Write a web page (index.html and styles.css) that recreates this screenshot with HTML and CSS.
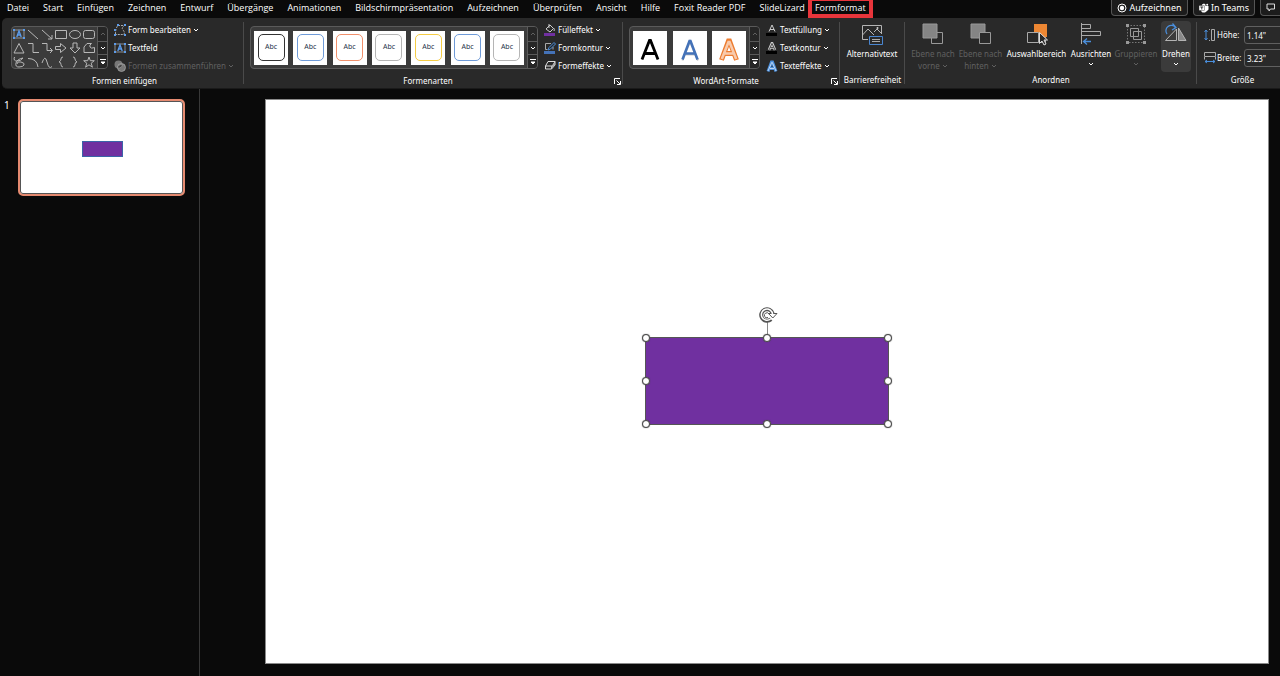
FILE: index.html
```html
<!DOCTYPE html>
<html lang="de">
<head>
<meta charset="utf-8">
<title>Präsentation – Formformat</title>
<link rel="stylesheet" href="styles.css">
</head>
<body>
<svg class="defs" aria-hidden="true">
  <symbol id="down" viewBox="0 0 6 6"><path d="M1 2l2 2 2-2" fill="none" stroke="currentColor"/></symbol>
  <symbol id="up" viewBox="0 0 6 6"><path d="M1 4l2-2 2 2" fill="none" stroke="currentColor"/></symbol>
  <symbol id="more" viewBox="0 0 6 8"><path d="M0 1.500h6M1 4l2 2 2-2z" fill="currentColor" stroke="currentColor"/></symbol>
  <symbol id="launch" viewBox="0 0 7 7"><path d="M.5 6V.5H6M2.500 2.500l3.500 3.500M6.500 3v3.500H3" fill="none" stroke="currentColor"/></symbol>
  <symbol id="textbox" viewBox="0 0 12 10"><path d="M1.500 1h9M1.500 9h9M1 1.500v7M11 1.500v7" fill="none" stroke="#b8b8b8" stroke-width=".7"/><path d="M0 0h2v2H0zM10 0h2v2h-2zM0 8h2v2H0zM10 8h2v2h-2z" fill="#5b9bea"/><path d="M3.800 8L6 2l2.200 6M4.700 6h2.600" fill="none" stroke="#5b9bea" stroke-width="1.400"/></symbol>
</svg>

<header class="tabs">
  <nav class="tab-list">
    <button class="tab">Datei</button>
    <button class="tab">Start</button>
    <button class="tab">Einfügen</button>
    <button class="tab">Zeichnen</button>
    <button class="tab">Entwurf</button>
    <button class="tab">Übergänge</button>
    <button class="tab">Animationen</button>
    <button class="tab">Bildschirmpräsentation</button>
    <button class="tab">Aufzeichnen</button>
    <button class="tab">Überprüfen</button>
    <button class="tab">Ansicht</button>
    <button class="tab">Hilfe</button>
    <button class="tab">Foxit Reader PDF</button>
    <button class="tab">SlideLizard</button>
    <button class="tab tab-active">Formformat</button>
  </nav>
  <div class="actions">
    <button class="action record"><svg width="10" height="10" viewBox="0 0 10 10"><circle cx="5" cy="5" r="4" fill="none" stroke="#fff"/><circle cx="5" cy="5" r="2.2" fill="#fff"/></svg>Aufzeichnen</button>
    <button class="action teams"><svg width="10" height="10" viewBox="0 0 10 10"><path d="M3 3V1.500L5 .5l1.500 1V3H9.500v3.500L8 8 6 9.500H3.500L2 8z" fill="#fff"/><circle cx="8.200" cy="1.700" r="1" fill="#fff"/><rect y="2.500" width="5.500" height="5" rx=".5" fill="#fff" stroke="#222" stroke-width=".4"/><path d="M1.300 4h3M2.800 4v2.500" stroke="#222" fill="none" stroke-width=".9"/></svg>In Teams</button>
    <button class="action comments" aria-label="Kommentare"><svg width="9" height="9" viewBox="0 0 9 9"><path d="M1 1h7.500v5H4.500L3 8V6H1z" fill="none" stroke="#ddd"/></svg></button>
  </div>
</header>

<section class="ribbon">
  <div class="group g-insert">
    <div class="group-body">
      <div class="gallery">
        <div class="shapes">
          <button aria-label="Textfeld"><svg class="box" viewBox="0 0 12 10"><use href="#textbox"/></svg></button>
          <button aria-label="Linie"><svg viewBox="0 0 12 12"><path d="M1 2l10 9"/></svg></button>
          <button aria-label="Pfeil"><svg viewBox="0 0 12 12"><path d="M1 2l10 9M11 7v4H7"/></svg></button>
          <button aria-label="Rechteck"><svg viewBox="0 0 12 12"><path d="M.5 2.500h11v8H.5z"/></svg></button>
          <button aria-label="Ellipse"><svg viewBox="0 0 12 12"><ellipse cx="6" cy="6.500" rx="5.500" ry="4"/></svg></button>
          <button aria-label="Abgerundetes Rechteck"><svg viewBox="0 0 12 12"><rect x=".5" y="2.500" width="11" height="8" rx="2"/></svg></button>
          <button aria-label="Dreieck"><svg viewBox="0 0 12 12"><path d="M6 1.500l5 9.500H1z"/></svg></button>
          <button aria-label="Gewinkelte Verbindung"><svg viewBox="0 0 12 12"><path d="M1 1.500h5v9h6"/></svg></button>
          <button aria-label="Gewinkelter Pfeil"><svg viewBox="0 0 12 12"><path d="M1 1.500h5v7h5M9 6l2.500 2.500L9 11"/></svg></button>
          <button aria-label="Pfeil rechts"><svg viewBox="0 0 12 12"><path d="M.5 4.500h5v-3L11 6l-5.500 4.500v-3h-5z"/></svg></button>
          <button aria-label="Pfeil unten"><svg viewBox="0 0 12 12"><path d="M4 1h4v5h3l-5 5-5-5h3z"/></svg></button>
          <button aria-label="Freihandform"><svg viewBox="0 0 12 12"><path d="M1 10.500V5l3-3.500h4.500Q6 3 7 5t4.500.5v5z"/></svg></button>
          <button aria-label="Skizze"><svg viewBox="0 0 12 12"><path d="M1.500 1Q0 5 4 5t6-3Q4 3 3 7t3 4 5-2-3-3-4 2"/></svg></button>
          <button aria-label="Bogen"><svg viewBox="0 0 12 12"><path d="M1 2.500q9 0 10 8.500"/></svg></button>
          <button aria-label="Kurve"><svg viewBox="0 0 12 12"><path d="M1 7q3-9 5-1t5 4.500"/></svg></button>
          <button aria-label="Klammer auf"><svg viewBox="0 0 12 12"><path d="M8 1Q6 1 6 3t-2 3q2 0 2 2.500T8 11"/></svg></button>
          <button aria-label="Klammer zu"><svg viewBox="0 0 12 12"><path d="M4 1q2 0 2 2t2 3Q6 6 6 8.500T4 11"/></svg></button>
          <button aria-label="Stern"><svg viewBox="0 0 12 12"><path d="M6 1l1.300 3.700h4L8.200 7.200l1.200 4L6 8.800l-3.400 2.400 1.200-4L.7 4.700h4z"/></svg></button>
        </div>
        <div class="scroll">
          <button class="off" aria-label="Nach oben"><svg width="6" height="6"><use href="#up"/></svg></button>
          <button aria-label="Nach unten"><svg width="6" height="6"><use href="#down"/></svg></button>
          <button aria-label="Mehr"><svg width="6" height="8"><use href="#more"/></svg></button>
        </div>
      </div>
      <div class="commands">
        <button><svg width="12" height="12" viewBox="0 0 12 12"><path d="M1.500 10Q1.500 4 4 1.500h6.500Q7 4 9 6t1 4.500H2" fill="none" stroke="#aaa" stroke-dasharray="2 1"/><path d="M3 0h2v2H3zM10 0h2v2h-2zM0 5h2v2H0zM0 10h2v2H0zM10 10h2v2h-2z" fill="#5b9bea"/></svg>Form bearbeiten<svg width="6" height="6"><use href="#down"/></svg></button>
        <button><svg width="12" height="10"><use href="#textbox"/></svg>Textfeld</button>
        <button class="off"><svg width="12" height="12" viewBox="0 0 12 12"><circle cx="4.500" cy="4.500" r="4" fill="#777"/><circle cx="7.500" cy="7.500" r="4" fill="#777" stroke="#aaa" stroke-width=".7"/><path d="M8.500 4.500a4 4 0 0 1-5 3.500 4 4 0 0 1 5-3.500" fill="#444" stroke="#aaa" stroke-width=".6"/></svg>Formen zusammenführen<svg width="6" height="6"><use href="#down"/></svg></button>
      </div>
    </div>
    <div class="group-label"><span>Formen einfügen</span></div>
  </div>

  <div class="group g-styles">
    <div class="group-body">
      <div class="gallery">
        <div class="tiles">
          <button class="tile"><span class="abc black">Abc</span></button>
          <button class="tile"><span class="abc blue">Abc</span></button>
          <button class="tile"><span class="abc orange">Abc</span></button>
          <button class="tile"><span class="abc gray">Abc</span></button>
          <button class="tile"><span class="abc yellow">Abc</span></button>
          <button class="tile"><span class="abc blue">Abc</span></button>
          <button class="tile"><span class="abc gray">Abc</span></button>
        </div>
        <div class="scroll">
          <button class="off" aria-label="Nach oben"><svg width="6" height="6"><use href="#up"/></svg></button>
          <button aria-label="Nach unten"><svg width="6" height="6"><use href="#down"/></svg></button>
          <button aria-label="Mehr"><svg width="6" height="8"><use href="#more"/></svg></button>
        </div>
      </div>
      <div class="commands">
        <button><svg width="12" height="12" viewBox="0 0 12 12"><path d="M2 5l4-4 3.500 3.500L6 8zM5 0v4M9.500 4q1.500 1 .5 3" fill="none" stroke="#ccc"/><path d="M0 9h11v3H0z" fill="#7030a0"/></svg>Fülleffekt<svg width="6" height="6"><use href="#down"/></svg></button>
        <button><svg width="12" height="12" viewBox="0 0 12 12"><path d="M7 1.500H1.500v6h2M9 5v2.500" fill="none" stroke="#aaa"/><path d="M4 8l1-2.500L10 .5 11.500 2l-5 5z" fill="none" stroke="#4a8edb"/><path d="M0 9h11v3H0z" fill="#4472b8"/></svg>Formkontur<svg width="6" height="6"><use href="#down"/></svg></button>
        <button><svg width="12" height="12" viewBox="0 0 12 12"><path d="M4 1.500h7L8.500 6H1.500zM1.500 6v3h6V6M7.500 9L11 5V1.500" fill="none" stroke="#ddd"/><path d="M7.500 6L11 2v3L7.500 9z" fill="#aaa"/></svg>Formeffekte<svg width="6" height="6"><use href="#down"/></svg></button>
      </div>
    </div>
    <div class="group-label"><span>Formenarten</span><button class="launcher" aria-label="Form formatieren"><svg width="7" height="7"><use href="#launch"/></svg></button></div>
  </div>

  <div class="group g-wordart">
    <div class="group-body">
      <div class="gallery">
        <div class="tiles">
          <button class="tile" aria-label="Schwarz"><svg width="34" height="34" viewBox="0 0 34 34"><path d="M9 28.500L16.500 9.500h1L25 28.500M11.500 22.500h11" fill="none" stroke="#000" stroke-width="2.800"/></svg></button>
          <button class="tile" aria-label="Blau"><svg width="34" height="34" viewBox="0 0 34 34"><path d="M9.500 29.500L17 10.500 25 29.500M12 23.500h10" fill="none" stroke="#ccc" stroke-width="2"/><path d="M9.500 28.500L16.500 10h1L24.500 28.500M12 22.500h10" fill="none" stroke="#4472b8" stroke-width="2.600"/></svg></button>
          <button class="tile" aria-label="Orange"><svg width="34" height="34" viewBox="0 0 34 34"><path d="M9.500 29L16.500 10h1L24.500 29M12 22.500h10" fill="none" stroke="#ed7d31" stroke-width="5"/><path d="M9.800 28L16.500 11h1L24.200 28M12 22.500h10" fill="none" stroke="#f8cbad" stroke-width="2.600"/></svg></button>
        </div>
        <div class="scroll">
          <button class="off" aria-label="Nach oben"><svg width="6" height="6"><use href="#up"/></svg></button>
          <button aria-label="Nach unten"><svg width="6" height="6"><use href="#down"/></svg></button>
          <button aria-label="Mehr"><svg width="6" height="8"><use href="#more"/></svg></button>
        </div>
      </div>
      <div class="commands">
        <button><svg width="12" height="12" viewBox="0 0 12 12"><path d="M3 7.500L6 1l3 6.500M4 5.500h4" fill="none" stroke="#ccc"/><path d="M0 9h11v3H0z" fill="#000"/></svg>Textfüllung<svg width="6" height="6"><use href="#down"/></svg></button>
        <button><svg width="12" height="12" viewBox="0 0 12 12"><path d="M3 8L6 1l3 7M4.500 5.500h3" fill="none" stroke="#ccc" stroke-width="2.600"/><path d="M3 8L6 1.500 9 8M4.500 5.500h3" fill="none" stroke="#333" stroke-width=".8"/><path d="M0 9h11v3H0z" fill="#000"/></svg>Textkontur<svg width="6" height="6"><use href="#down"/></svg></button>
        <button><svg width="12" height="12" viewBox="0 0 12 12"><path d="M2 11.500L5.500 2h1L10 11.500M4 8.500h4" fill="none" stroke="#4a8edb" stroke-width="3"/><path d="M2 11L5.700 2.500h.6L10 11M4 8.500h4" fill="none" stroke="#dce9f8" stroke-width=".8"/></svg>Texteffekte<svg width="6" height="6"><use href="#down"/></svg></button>
      </div>
    </div>
    <div class="group-label"><span>WordArt-Formate</span><button class="launcher" aria-label="Texteffekte formatieren"><svg width="7" height="7"><use href="#launch"/></svg></button></div>
  </div>

  <div class="group g-alt">
    <div class="group-body">
      <button class="big"><svg width="24" height="24" viewBox="0 0 24 24"><path d="M8 17.500H2.500v-14h19V12M2.500 13l5.500-6 6 6M14 10l3-3 4 4" fill="none" stroke="#b4b4b4"/><circle cx="17.500" cy="6" r="1" fill="#ccc"/><path d="M9.500 14.500h13v8h-13z" fill="#292929" stroke="#4a86d0"/><path d="M12 17.500h8M12 19.500h8" stroke="#aaa"/></svg>Alternativtext</button>
    </div>
    <div class="group-label"><span>Barrierefreiheit</span></div>
  </div>

  <div class="group g-arrange">
    <div class="group-body">
      <button class="big off"><svg width="24" height="24" viewBox="0 0 24 24"><path d="M10.500 10.500h11v11h-11z" fill="none" stroke="#999"/><path d="M2 2h14v14H2z" fill="#858585" stroke="#999"/></svg><span>Ebene nach<br>vorne <svg width="6" height="6"><use href="#down"/></svg></span></button>
      <button class="big off"><svg width="24" height="24" viewBox="0 0 24 24"><path d="M2 2h14v14H2z" fill="#858585" stroke="#999"/><path d="M10.500 10.500h11v11h-11z" fill="#292929" stroke="#999"/></svg><span>Ebene nach<br>hinten <svg width="6" height="6"><use href="#down"/></svg></span></button>
      <button class="big"><svg width="24" height="24" viewBox="0 0 24 24"><path d="M9 2h13v13H9z" fill="#ed8733"/><path d="M2.500 10.500h11v10h-11zM13.500 15.500h7v5h-7" fill="#292929" stroke="#aaa"/><path d="M14.500 10.500v11l2.500-2.500 2 4 2-1-2-4h3.500z" fill="#292929" stroke="#ddd"/></svg>Auswahlbereich</button>
      <button class="big"><svg width="24" height="24" viewBox="0 0 24 24"><path d="M2.500 1v21M2.500 2.500h9v4h-9M2.500 9.500h19v4h-19" fill="none" stroke="#aaa"/><path d="M12 19.500H4.500M8 16.500l-3.500 3 3.500 3" fill="none" stroke="#4a8edb" stroke-width="1.300"/></svg>Ausrichten<svg class="arrow" width="6" height="6"><use href="#down"/></svg></button>
      <button class="big off"><svg width="24" height="24" viewBox="0 0 24 24"><path d="M3.500 3.500h17v17h-17z" fill="none" stroke="#777" stroke-dasharray="1.500 1.500"/><path d="M2 2h3v3H2zM19 2h3v3h-3zM2 19h3v3H2zM19 19h3v3h-3z" fill="#999"/><path d="M6.500 6.500h8v8h-8zM9.500 9.500h8v8h-8z" fill="none" stroke="#999"/></svg>Gruppieren<svg class="arrow" width="6" height="6"><use href="#down"/></svg></button>
      <button class="big hover"><svg width="24" height="24" viewBox="0 0 24 24"><path d="M12.500 7v11.500H1.500z" fill="none" stroke="#b4b4b4"/><path d="M14.500 6v12.500h7.500z" fill="#888" stroke="#b4b4b4"/><path d="M3 12A5 5 0 0 1 11.500 5.500M8.500 1.500L12 5.500 8 8" fill="none" stroke="#4a8edb" stroke-width="1.300"/></svg>Drehen<svg class="arrow" width="6" height="6"><use href="#down"/></svg></button>
    </div>
    <div class="group-label"><span>Anordnen</span></div>
  </div>

  <div class="group g-size">
    <div class="group-body">
      <label for="height"><svg width="12" height="12" viewBox="0 0 12 12"><path d="M5 .5h1M5 11.500h1" stroke="#aaa"/><path d="M7.500 .5h3v11h-3z" fill="none" stroke="#aaa"/><path d="M2 1v10M.5 3L2 1l1.500 2M.5 9L2 11l1.500-2" fill="none" stroke="#4a8edb"/></svg>Höhe:</label>
      <input id="height" value="1.14&quot;">
      <label for="width"><svg width="12" height="12" viewBox="0 0 12 12"><path d="M.5 .5h11v4H.5zM.5 5v2.500M11.500 5v2.500" fill="none" stroke="#aaa"/><path d="M1 9.500h10M3 8L1 9.500 3 11M9 8l2 1.500L9 11" fill="none" stroke="#4a8edb"/></svg>Breite:</label>
      <input id="width" value="3.23&quot;">
    </div>
    <div class="group-label"><span>Größe</span></div>
  </div>
</section>

<main class="workspace">
  <aside class="thumbs">
    <span class="number">1</span>
    <button class="thumb" aria-label="Folie 1"><span class="thumb-shape"></span></button>
  </aside>
  <section class="editor">
    <div class="slide">
      <div class="shape">
        <span class="stem"></span>
        <svg class="rotate" width="20" height="18" viewBox="0 0 20 18"><path d="M13 13.200A5.800 5.800 0 1 1 14.600 7.500" fill="none" stroke="#555" stroke-width="4"/><path d="M10.500 7.500h8.500l-4.200 4.500z" fill="#fff" stroke="#555"/><path d="M12.800 12.800A5.600 5.600 0 1 1 14.600 8.500" fill="none" stroke="#fff" stroke-width="1.500"/><path d="M10 11.500a2.500 2.500 0 1 1 1-3.500" fill="none" stroke="#555"/></svg>
        <i class="handle n w"></i><i class="handle n c"></i><i class="handle n e"></i>
        <i class="handle m w"></i><i class="handle m e"></i>
        <i class="handle s w"></i><i class="handle s c"></i><i class="handle s e"></i>
      </div>
    </div>
  </section>
</main>
</body>
</html>
```

FILE: styles.css
```css
* { box-sizing: border-box; }
body {
  margin: 0;
  min-height: 100vh;
  display: flex;
  flex-direction: column;
  overflow: hidden;
  background: #0a0a0a;
  color: #fff;
  font: 8px/12px "Noto Sans", "Open Sans", sans-serif;
}
button {
  margin: 0;
  padding: 0;
  border: 0;
  background: none;
  color: inherit;
  font: inherit;
  white-space: nowrap;
}
svg { display: block; flex: none; }
.defs { position: absolute; width: 0; height: 0; }

/* Tab row */
.tabs { display: flex; justify-content: space-between; height: 18px; overflow: hidden; font-size: 9px; }
.tab-list { display: flex; gap: 14px; padding-left: 7px; font-family: "Open Sans", "Noto Sans", sans-serif; }
.tab { height: 16px; }
.tab-active {
  height: 18px;
  margin-left: -11px;
  padding: 0 3px;
  border: 4px solid #e8353b;
  border-top-width: 1px;
}
.actions { display: flex; gap: 5px; }
.action {
  display: flex;
  align-items: center;
  justify-content: center;
  gap: 2px;
  height: 16px;
  border: 1px solid #555;
  border-top: 0;
  border-radius: 0 0 4px 4px;
  background: #1c1c1c;
}
.record { width: 77px; }
.teams { width: 62px; }
.comments { width: 20px; border-right: 0; border-radius: 0 0 0 4px; }

/* Ribbon */
.ribbon {
  display: flex;
  height: 71px;
  margin-left: 2px;
  overflow: hidden;
  border-bottom: 1px solid #1a1a1a;
  border-radius: 5px 0 0 5px;
  background: #292929;
}
.group { position: relative; flex: none; display: flex; flex-direction: column; padding-top: 3px; }
.group:not(:last-child)::after {
  content: "";
  position: absolute;
  top: 4px;
  right: 0;
  bottom: 4px;
  width: 1px;
  background: #4a4a4a;
}
.group-body { display: flex; height: 53px; }
.group-label { display: flex; align-items: center; height: 16px; }
.group-label span { flex: 1; text-align: center; }
.g-insert { width: 242px; padding-left: 9px; }
.g-insert .group-label { padding-right: 6px; }
.g-styles { width: 379px; padding-left: 6px; }
.g-styles .group-label span { padding-right: 8px; }
.g-wordart { width: 217px; padding-left: 6px; }
.g-wordart .group-label span { padding-right: 8px; }
.g-alt { width: 65px; }
.g-arrange { width: 292px; }
.g-size { width: 91px; }
.launcher { width: 9px; height: 7px; }

.gallery {
  display: flex;
  height: 43px;
  margin-top: 5px;
  border: 1px solid #5a5a5a;
  border-radius: 4px;
  background: #3b3b3b;
}
.shapes { display: grid; grid-template-columns: repeat(6, 14px); grid-template-rows: repeat(3, 14px); width: 85px; }
.shapes button { display: grid; place-items: center; }
.shapes svg { width: 12px; height: 12px; fill: none; stroke: #b8b8b8; }
.shapes .box { height: 10px; stroke: none; }
.tiles { flex: 1; display: flex; justify-content: space-between; align-items: center; padding: 0 3px; }
.scroll { display: grid; grid-template-rows: repeat(3, 1fr); width: 10px; border-left: 1px solid #5a5a5a; background: #262626; border-radius: 0 3px 3px 0; }
.scroll button { display: grid; place-items: center; }
.scroll button + button { border-top: 1px solid #5a5a5a; }
.tile { display: grid; place-items: center; width: 34px; height: 34px; background: #fff; }
.g-styles .gallery { width: 288px; }
.g-wordart .gallery { width: 131px; }
.abc {
  width: 27px;
  height: 27px;
  border: 1px solid;
  border-radius: 5px;
  font-size: 7px;
  line-height: 24px;
}
.abc::first-line { color: #26324a; }
.black { border-color: #333; }
.blue { border-color: #6f9bd8; }
.orange { border-color: #f0906c; }
.gray { border-color: #b5b5b5; }
.yellow { border-color: #f5cc45; }

.commands { display: grid; grid-template-rows: repeat(3, 18px); margin-left: 6px; justify-items: start; align-content: start; }
.commands button { display: flex; align-items: center; gap: 2px; }
.off { color: #606060; }

.big { display: flex; flex-direction: column; align-items: center; justify-content: flex-start; }
.big > svg:first-child { margin-top: 1px; margin-bottom: 2px; }
.big .arrow { margin-top: 1px; }
.big span svg { display: inline-block; }
.g-alt .big { width: 64px; }
.g-arrange .group-body { display: grid; grid-template-columns: 48px 47px 65px 44px 46px 32px; padding-left: 4px; }
.hover { margin-left: 2px; border-radius: 4px; background: #3b3b3b; }

.g-size .group-body { display: grid; grid-template-columns: 40px 44px; grid-auto-rows: 18px; row-gap: 5px; padding: 5px 0 0 7px; }
.g-size label { display: flex; align-items: center; gap: 1px; white-space: nowrap; }
.g-size input {
  width: 44px;
  height: 18px;
  padding: 0 2px;
  border: 1px solid #606060;
  border-radius: 3px;
  background: #292929;
  color: #fff;
  font: inherit;
}

/* Slide list and editor */
.workspace { flex: 1; display: grid; grid-template-columns: 200px 1fr; }
.thumbs { display: flex; align-items: flex-start; padding: 10px 0 0 4px; border-right: 1px solid #383838; }
.number { width: 14px; font-size: 10px; }
.thumb {
  position: relative;
  width: 167px;
  height: 97px;
  border: 2px solid #e58a70;
  border-radius: 5px;
  background: #fff;
  box-shadow: inset 0 0 0 1px #555;
}
.thumb-shape { position: absolute; left: 38%; top: 43%; width: 41px; height: 16px; border: 1px solid #3a65a8; background: #7030a0; }
.editor { padding: 10px 11px 12px 65px; }
.slide { position: relative; aspect-ratio: 16 / 9; border: 1px solid #8a8a8a; background: #fff; }
.shape { position: absolute; left: 37.8%; top: 42.2%; width: 24.4%; height: 15.5%; border: 1px solid #555; background: #7030a0; }
.stem { position: absolute; left: 50%; bottom: 100%; width: 1px; height: 18px; background: #888; }
.rotate { position: absolute; left: calc(50% - 9px); bottom: calc(100% + 14px); }
.handle { position: absolute; width: 8px; height: 8px; margin: -4px; border: 1px solid #444; border-radius: 50%; background: #fff; box-shadow: 0 0 1px #444; }
.n { top: 0; }
.m { top: 50%; }
.s { top: 100%; }
.w { left: 0; }
.c { left: 50%; }
.e { left: 100%; }
```
